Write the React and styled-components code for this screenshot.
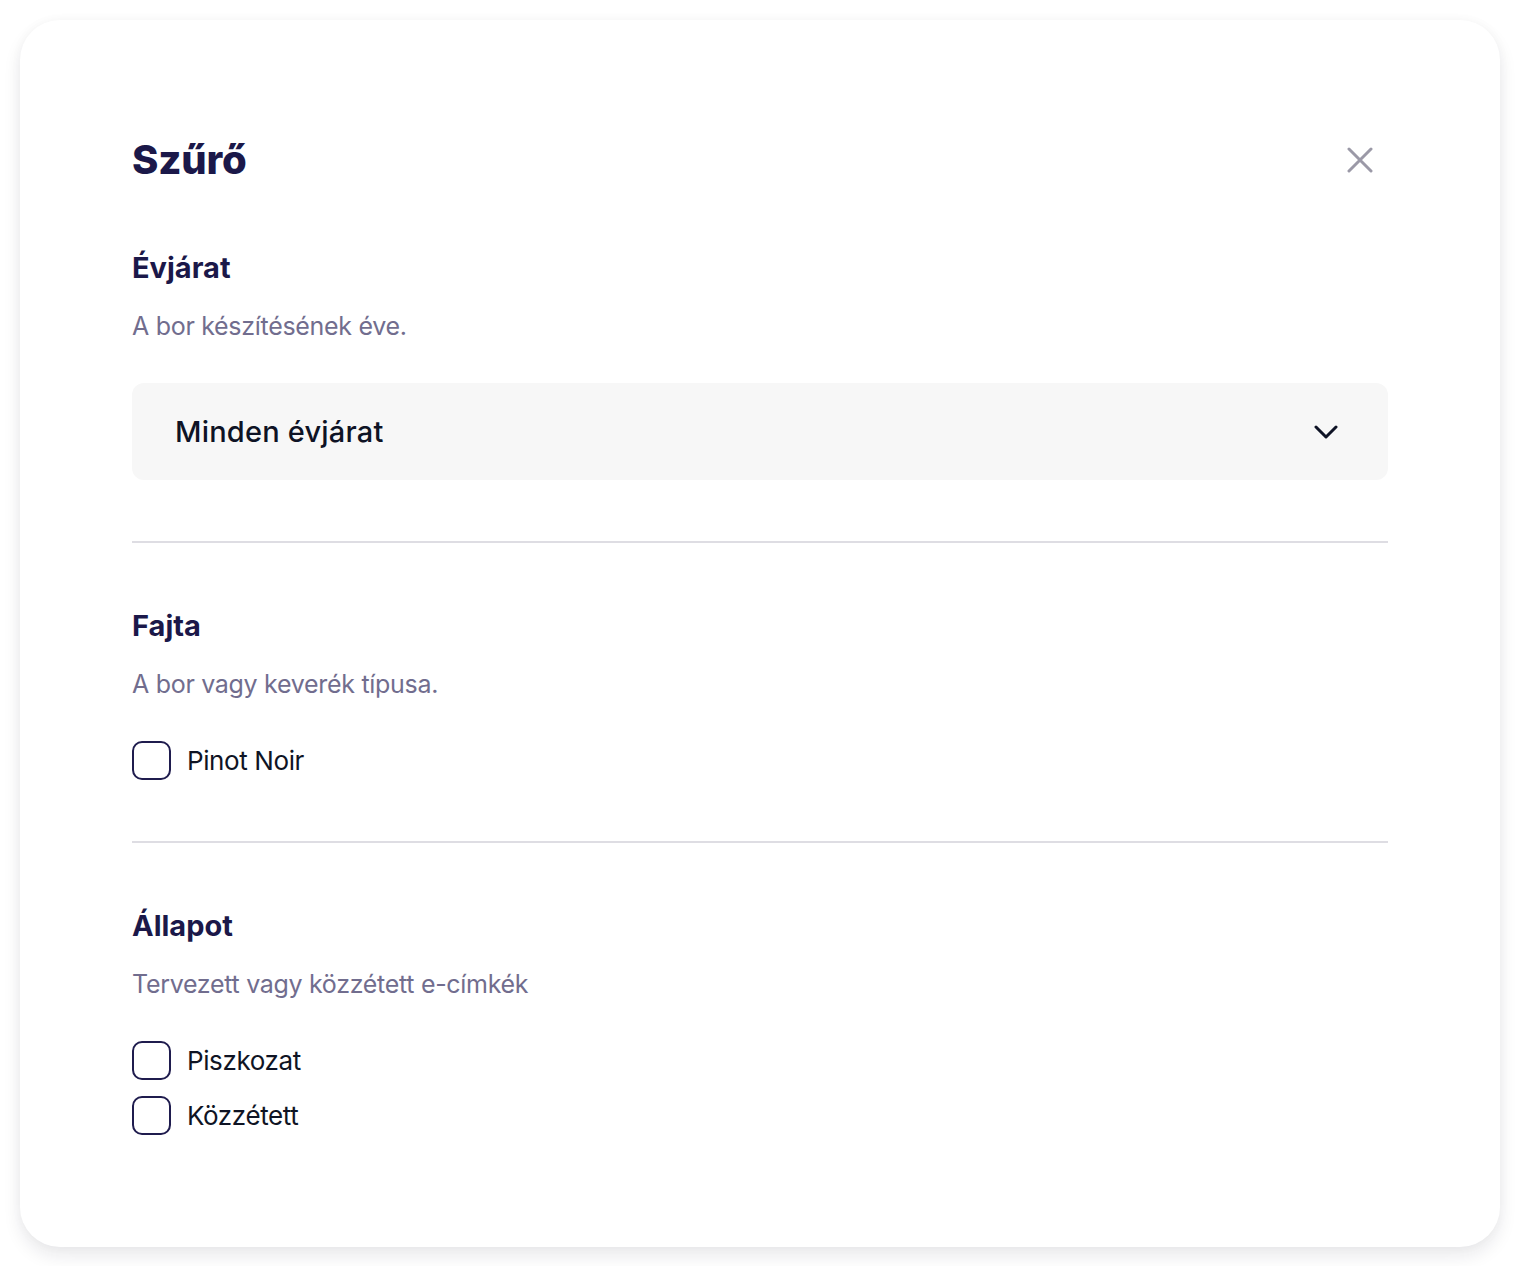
import React from "react";
import styled, { createGlobalStyle } from "styled-components";

const Global = createGlobalStyle`
  * { box-sizing: border-box; }
  html, body { margin: 0; padding: 0; background: #ffffff; }
  body { font-family: "Inter", "Noto Sans", sans-serif; -webkit-font-smoothing: antialiased; }
`;

const Page = styled.div`
  padding: 20px 20px 19px;
`;

const Card = styled.div`
  background: #ffffff;
  border-radius: 40px;
  box-shadow: 0 9px 18px rgba(20, 20, 40, 0.09), 0 0 12px rgba(20, 20, 40, 0.03);
  padding: 116px 112px 112px;
`;

const Header = styled.div`
  display: flex;
  align-items: center;
  justify-content: space-between;
  height: 48px;
`;

const Title = styled.h1`
  margin: 0;
  font-size: 40px;
  line-height: 48px;
  font-weight: 800;
  color: #1b1849;
  letter-spacing: -0.2px;
`;

const CloseButton = styled.button`
  border: 0;
  background: none;
  padding: 0;
  width: 32px;
  height: 32px;
  margin-right: 12px;
  display: flex;
  align-items: center;
  justify-content: center;
  color: #9b99a7;
  cursor: pointer;
`;

const Section = styled.section`
  padding: ${(p) => (p.$first ? "66px" : "65px")} 0 ${(p) => (p.$last ? "0" : "61px")};
  border-bottom: ${(p) => (p.$last ? "none" : "2px solid #dedde3")};
`;

const SectionTitle = styled.h2`
  margin: 0;
  font-size: 29px;
  line-height: 36px;
  font-weight: 700;
  color: #1b1849;
  letter-spacing: 0;
`;

const SectionDesc = styled.p`
  margin: 24px 0 41px;
  font-size: 25px;
  line-height: 32px;
  font-weight: 400;
  color: #716d8e;
  letter-spacing: -0.3px;
`;

const Select = styled.div`
  height: 97px;
  background: #f7f7f7;
  border-radius: 12px;
  display: flex;
  align-items: center;
  justify-content: space-between;
  padding: 0 50px 0 43px;
  cursor: pointer;
`;

const SelectValue = styled.span`
  font-size: 29px;
  font-weight: 500;
  color: #0e1325;
  letter-spacing: 0.2px;
`;

const OptionList = styled.div`
  display: flex;
  flex-direction: column;
  gap: 16px;
`;

const Option = styled.label`
  display: flex;
  align-items: center;
  gap: 16px;
  min-height: 38px;
  cursor: pointer;
`;

const Box = styled.span`
  display: block;
  width: 39px;
  height: 39px;
  border: 2px solid #1f1c4e;
  border-radius: 10px;
  flex-shrink: 0;
`;

const OptionText = styled.span`
  font-size: 26px;
  font-weight: 400;
  color: #0f1424;
  letter-spacing: -0.4px;
`;

const CloseIcon = () => (
  <svg width="26" height="26" viewBox="0 0 26 26" fill="none" stroke="currentColor" strokeWidth="3" strokeLinecap="round">
    <path d="M2 2 L24 24 M24 2 L2 24" />
  </svg>
);

const Chevron = () => (
  <svg width="24" height="14" viewBox="0 0 24 14" fill="none" stroke="#0e1325" strokeWidth="3" strokeLinecap="round" strokeLinejoin="round">
    <path d="M2 2 L12 12 L22 2" />
  </svg>
);

const CheckOption = ({ label }) => (
  <Option>
    <Box />
    <OptionText>{label}</OptionText>
  </Option>
);

export default function App() {
  return (
    <>
      <Global />
      <Page>
        <Card>
          <Header>
            <Title>Szűrő</Title>
            <CloseButton aria-label="Bezárás">
              <CloseIcon />
            </CloseButton>
          </Header>

          <Section $first>
            <SectionTitle>Évjárat</SectionTitle>
            <SectionDesc>A bor készítésének éve.</SectionDesc>
            <Select>
              <SelectValue>Minden évjárat</SelectValue>
              <Chevron />
            </Select>
          </Section>

          <Section>
            <SectionTitle>Fajta</SectionTitle>
            <SectionDesc>A bor vagy keverék típusa.</SectionDesc>
            <OptionList>
              <CheckOption label="Pinot Noir" />
            </OptionList>
          </Section>

          <Section $last>
            <SectionTitle>Állapot</SectionTitle>
            <SectionDesc>Tervezett vagy közzétett e-címkék</SectionDesc>
            <OptionList>
              <CheckOption label="Piszkozat" />
              <CheckOption label="Közzétett" />
            </OptionList>
          </Section>
        </Card>
      </Page>
    </>
  );
}
